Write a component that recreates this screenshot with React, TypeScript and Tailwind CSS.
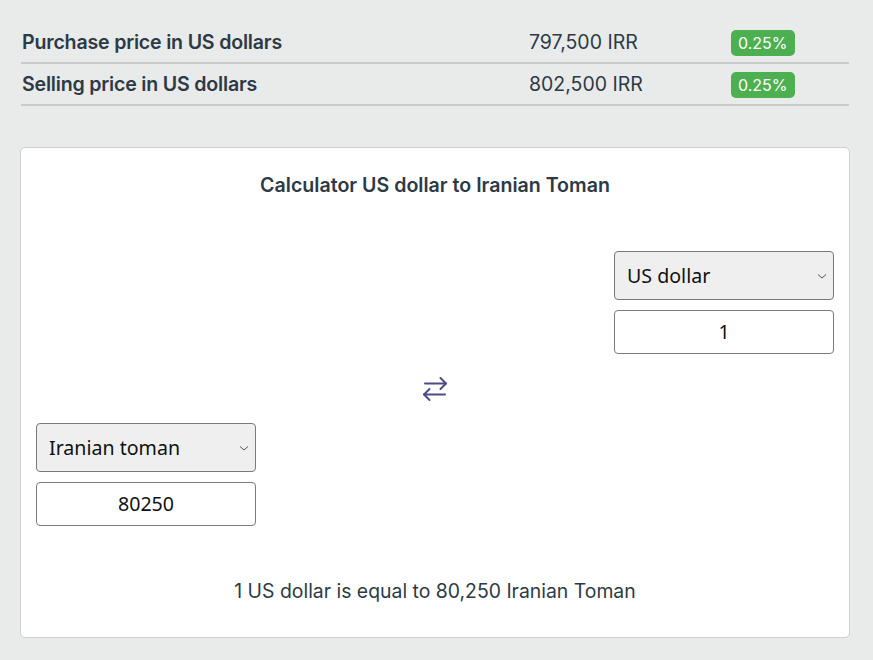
import React from "react";

function Chevron() {
  return (
    <svg width="12" height="8" viewBox="0 0 12 8" fill="none" className="absolute right-[5px] top-1/2 -translate-y-1/2">
      <path d="M2 2.5 L6 6 L10 2.5" stroke="#555" strokeWidth="1" />
    </svg>
  );
}

function Swap() {
  return (
    <svg width="30" height="26" viewBox="0 0 30 26" fill="none" stroke="#4b4b85" strokeWidth="2" strokeLinecap="round" strokeLinejoin="round">
      <path d="M5 7.5 H26" />
      <path d="M20.5 2 L26 7.5 L20.5 13" />
      <path d="M25 18.5 H4" />
      <path d="M9.5 13 L4 18.5 L9.5 24" />
    </svg>
  );
}

function Block({ label, value }: { label: string; value: string }) {
  return (
    <div className="w-[220px] flex flex-col gap-[10px]">
      <div className="relative h-[49px] bg-[#efefef] border border-[#7a7a7a] rounded-[4px] flex items-center pl-[12px] text-[19.6px] text-[#111]" style={{ fontFamily: '"Noto Sans", sans-serif' }}>
        {label}
        <Chevron />
      </div>
      <div className="h-[44px] bg-white border border-[#7a7a7a] rounded-[4px] flex items-center justify-center text-[19.6px] text-[#111]" style={{ fontFamily: '"Noto Sans", sans-serif' }}>
        {value}
      </div>
    </div>
  );
}

export default function App() {
  const rows = [
    { label: "Purchase price in US dollars", value: "797,500 IRR" },
    { label: "Selling price in US dollars", value: "802,500 IRR" },
  ];
  return (
    <div className="w-[873px] h-[660px] bg-[#e9eaea] overflow-hidden" style={{ fontFamily: 'Inter, "Noto Sans", sans-serif' }}>
      <div className="pt-[22px] px-[21px] mr-[3px]">
        {rows.map((r) => (
          <div key={r.label} className="h-[42px] pt-[1px] flex items-center border-b-2 border-[#c9caca] text-[#2d3a45]">
            <div className="w-[508px] pl-[1px] text-[19.6px] font-semibold tracking-[-0.2px]">{r.label}</div>
            <div className="w-[202px] text-[19.5px]">{r.value}</div>
            <div className="h-[26px] px-[7px] rounded-[5px] bg-[#4caf50] text-white text-[16px] flex items-center">0.25%</div>
          </div>
        ))}
      </div>
      <div className="mx-[20px] mt-[41px] mr-[23px] h-[491px] bg-white border border-[#cfcfcf] rounded-[5px] px-[15px] pt-[23px] flex flex-col">
        <div className="text-center text-[19.6px] font-semibold text-[#2d3a45] h-[28px] leading-[28px]">Calculator US dollar to Iranian Toman</div>
        <div className="mt-[52px] flex justify-end">
          <Block label="US dollar" value="1" />
        </div>
        <div className="flex justify-center mt-[22px] h-[26px]">
          <Swap />
        </div>
        <div className="mt-[21px] flex justify-start">
          <Block label="Iranian toman" value="80250" />
        </div>
        <div className="mt-[51px] text-center text-[19.4px] text-[#2d3a45] leading-[28px]">1 US dollar is equal to 80,250 Iranian Toman</div>
      </div>
    </div>
  );
}
